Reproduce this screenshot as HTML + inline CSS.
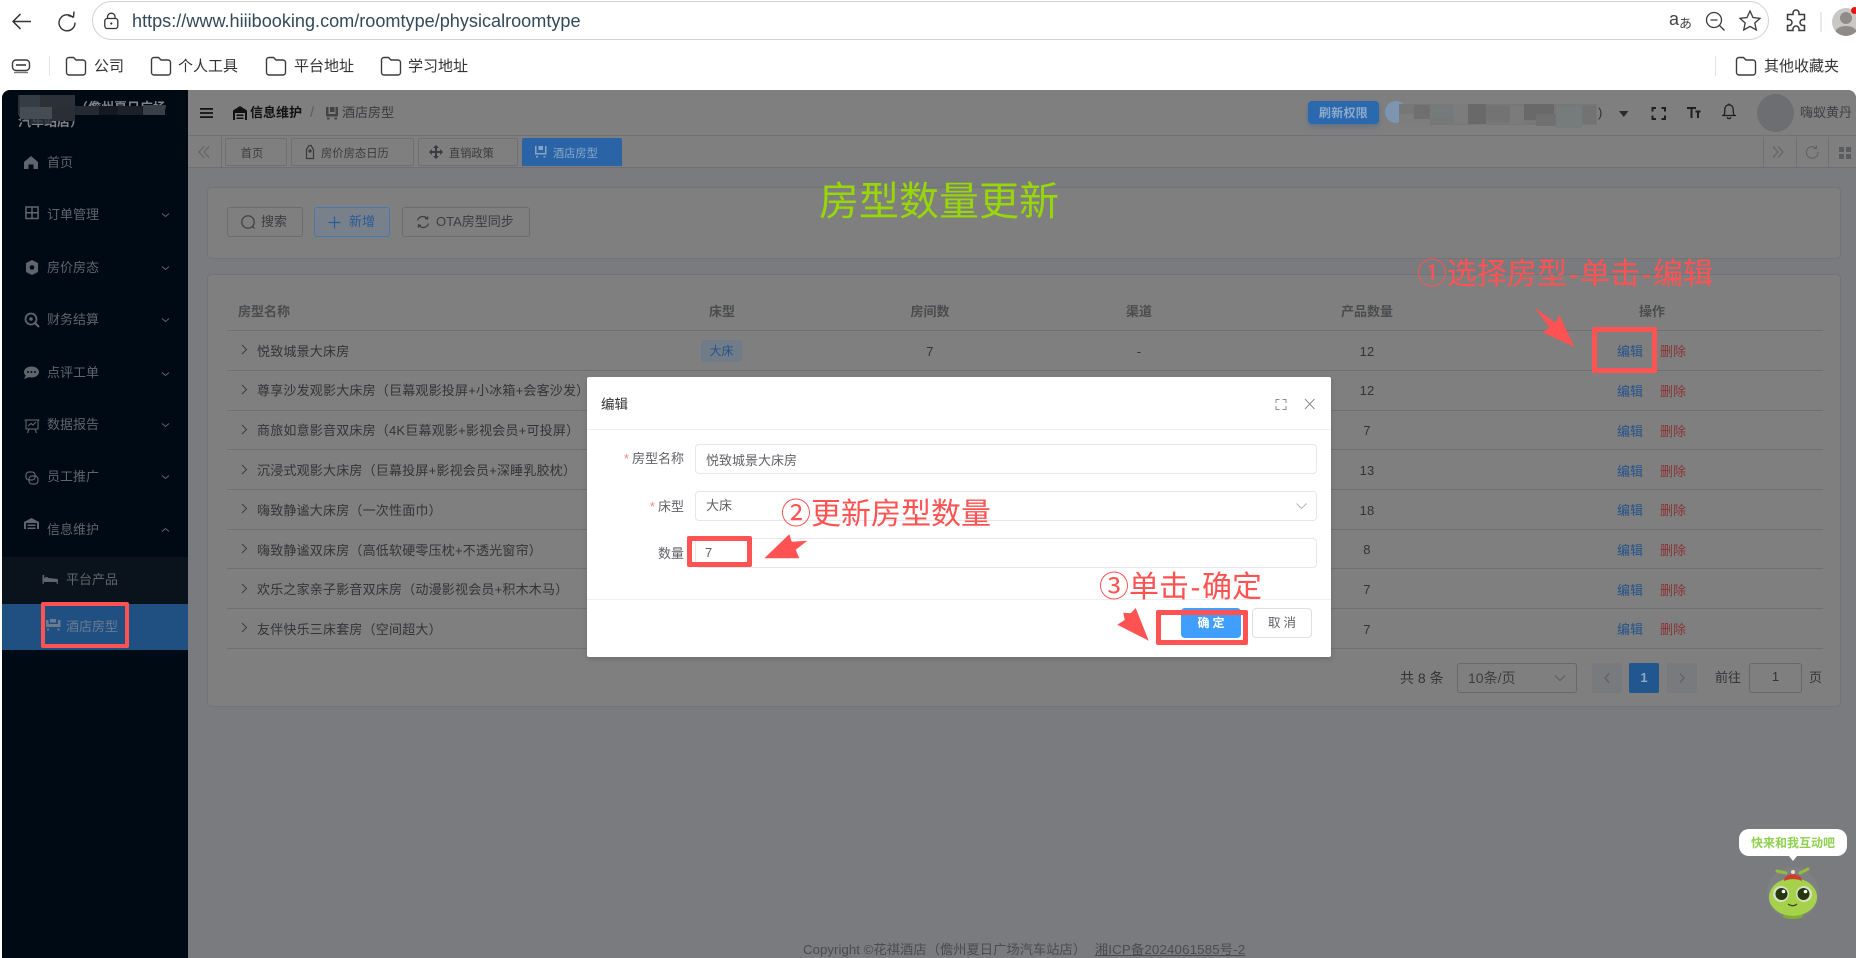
<!DOCTYPE html>
<html><head><meta charset="utf-8"><title>酒店房型</title>
<style>
html,body{margin:0;padding:0;width:1856px;height:958px;overflow:hidden;background:#fff}
body{position:relative;font-family:"Liberation Sans","Noto Sans CJK SC",sans-serif;font-size:13px}
.a{position:absolute;box-sizing:border-box}
.t{position:absolute;white-space:nowrap;line-height:20px;height:20px}
.c{transform:translateX(-50%)}
.r{transform:translateX(-100%)}
svg{position:absolute;overflow:visible}
.bk{font-size:15px;color:#333}
.m{font-size:13px;color:#5e656c}
.n{font-size:13px;color:#333437;letter-spacing:.2px}
.e{color:#24538b}.d{color:#8a3335}
.line{position:absolute;left:227px;width:1596px;height:1px;background:#6f7073}
.an{position:absolute;white-space:nowrap;color:#ff5252;font-size:30px;line-height:40px;height:40px;font-family:"Liberation Sans","Noto Sans CJK SC",sans-serif}
.an i{font-style:normal;margin:0 1.5px}
.box{position:absolute;box-sizing:border-box;border:5px solid #ff5252;border-radius:2px}
.tab{position:absolute;top:138px;height:28px;box-sizing:border-box;border:1px solid #6f7073;background:#7f7f7f;border-radius:2px}
.btn{position:absolute;top:207px;height:30px;box-sizing:border-box;border:1px solid #6b6c6f;border-radius:3px;background:#7f7f7f}
.ipt{position:absolute;left:695px;width:622px;height:30px;box-sizing:border-box;border:1px solid #e4e7ed;border-radius:4px;background:#fff}
.lbl{color:#606266;font-size:13px}
.pg{position:absolute;top:663px;height:30px;box-sizing:border-box;border-radius:2px}
</style></head><body>

<!-- browser chrome -->
<div class="a" style="left:92px;top:1px;width:1677px;height:39px;border:1.5px solid #d2d2d2;border-radius:20px;background:#fff"></div>
<svg style="left:0;top:0" width="130" height="42" fill="none" stroke="#333" stroke-width="1.5">
<path d="M31 21.5H13M20.5 14L13 21.5L20.5 29"/>
<path d="M73 17.5A8 8 0 1 0 75 22.5" stroke-width="1.4"/><path d="M68 15.5l5.5 1.5l.5-5.5" stroke-width="1.4"/>
<rect x="104.8" y="18.5" width="13" height="10" rx="2.5" stroke-width="1.3"/><path d="M107.5 18.5v-1.5a3.8 3.8 0 0 1 7.6 0v1.5" stroke-width="1.3"/><circle cx="111.3" cy="23.5" r="1.1" fill="#333" stroke="none"/>
</svg>
<div class="t" style="left:132px;top:11px;font-size:18.1px;color:#33495a">https://www.hiiibooking.com/roomtype/physicalroomtype</div>
<svg style="left:1660px;top:5px" width="196" height="36" fill="none" stroke="#3a3a3a" stroke-width="1.3">
<circle cx="54" cy="15" r="7.5"/><path d="M50.5 15h7M59.5 20.5l5 5"/>
<path d="M90 6l3 6.5 7 .8-5.2 4.7 1.5 7-6.3-3.6-6.3 3.6 1.5-7L80 13.3l7-.8z"/>
<path d="M133 8a3 3 0 0 1 6 0v1.5h5.5v5h-1.5a3 3 0 0 0 0 6h1.5v5h-5.5v-1.5a3 3 0 0 0-6 0v1.5h-5.5v-5H129a3 3 0 0 0 0-6h-1.5v-5H133z" stroke-width="1.5"/>
<path d="M161 7v20" stroke="#ddd"/>
</svg>
<div class="t" style="left:1669px;top:9px;font-size:18px;color:#444">a</div>
<div class="t" style="left:1679px;top:14px;font-size:13px;color:#444">あ</div>
<div class="a" style="left:1832px;top:8px;width:28px;height:28px;border-radius:50%;background:#c9c8c6;overflow:hidden"><div class="a" style="left:8px;top:4px;width:12px;height:12px;border-radius:50%;background:#8e8b88"></div><div class="a" style="left:3px;top:18px;width:22px;height:14px;border-radius:50%;background:#8e8b88"></div></div>
<div class="a" style="left:1851px;top:7px;width:7px;height:7px;border-radius:50%;background:#e11"></div>

<!-- bookmarks -->
<svg style="left:0;top:50px" width="1856" height="32" fill="none" stroke="#3c3c3c" stroke-width="1.4">
<rect x="12.5" y="10" width="17" height="10.5" rx="3.5"/><path d="M16 15h10" stroke-width="1.6"/><path d="M14 22.5h14" stroke="#777"/>
<path d="M49.5 6v20M1715.5 6v20" stroke="#e4e4e4" stroke-width="1"/>
<path id="f" d="M66.5 10a2.5 2.5 0 0 1 2.5-2.5h4.5l2.5 2.5h7a2.5 2.5 0 0 1 2.5 2.5v10a2.5 2.5 0 0 1-2.5 2.5h-14a2.5 2.5 0 0 1-2.5-2.5z"/>
<use href="#f" x="85"/><use href="#f" x="200"/><use href="#f" x="315"/><use href="#f" x="1670"/>
</svg>
<div class="t bk" style="left:94px;top:57px">公司</div>
<div class="t bk" style="left:178px;top:57px">个人工具</div>
<div class="t bk" style="left:294px;top:57px">平台地址</div>
<div class="t bk" style="left:408px;top:57px">学习地址</div>
<div class="t bk" style="left:1764px;top:57px">其他收藏夹</div>

<!-- app background -->
<div class="a" style="left:2px;top:90px;width:1854px;height:868px;background:#7a7b7e;border-radius:8px 8px 0 0;overflow:hidden">
<div class="a" style="left:186px;top:0;width:1668px;height:46px;background:#7f7f7f;border-bottom:1px solid #717275"></div>
<div class="a" style="left:186px;top:46px;width:1668px;height:32px;background:#7f7f7f;border-bottom:1px solid #6f7073"></div>
<div class="a" style="left:0;top:0;width:186px;height:868px;background:#000a14"></div>
<div class="a" style="left:0;top:466.5px;width:186px;height:47px;background:#0a121b"></div>
<div class="a" style="left:0;top:513.5px;width:186px;height:46.5px;background:#204f82"></div>
</div>

<!-- sidebar header, mosaic -->
<div class="t" style="left:75px;top:98px;font-size:13px;font-weight:bold;color:#7f8488">（儋州夏日广场</div>
<div class="t" style="left:18px;top:112px;font-size:13px;font-weight:bold;color:#7f8488">汽车站店）</div>
<svg style="left:18px;top:95px" width="150" height="36">
<rect x="57" y="11" width="90" height="9" fill="#14191f"/><rect x="57" y="11" width="24" height="9" fill="#242a31"/><rect x="100" y="11" width="24" height="9" fill="#1c2127"/><rect x="125" y="10" width="22" height="10" fill="#3a4047"/>
<rect x="0" y="0" width="57" height="20" fill="#2c3138"/><rect x="2" y="0" width="20" height="12" fill="#363c44"/><rect x="2" y="12" width="32" height="12" fill="#464c54"/><rect x="34" y="12" width="23" height="14" fill="#2a2f36"/><rect x="12" y="24" width="22" height="5" fill="#30353c" opacity=".8"/>
</svg>

<!-- sidebar icons -->
<svg style="left:0;top:130px" width="188" height="520" fill="#5e656c" stroke="none">
<path d="M31 26l7 6v7h-4.5v-4.5h-5V39H24v-7z"/>
<g fill="none" stroke="#5e656c" stroke-width="1.5"><rect x="26" y="77" width="12" height="11.5"/><path d="M26 82.8h12M32 77v11.5"/></g>
<path d="M32 130l6 3v9l-6 3-6-3v-9z"/><circle cx="32" cy="137.5" r="2.3" fill="#000a14"/>
<circle cx="31" cy="189" r="5.5" fill="none" stroke="#5e656c" stroke-width="1.8"/><path d="M35 193l4 4" stroke="#5e656c" stroke-width="2.2"/><circle cx="31" cy="189" r="1.8"/>
<ellipse cx="31.5" cy="242" rx="7.5" ry="5.5"/><path d="M26 245l-2 4 5-2z"/><circle cx="28" cy="242" r="1" fill="#000a14"/><circle cx="31.5" cy="242" r="1" fill="#000a14"/><circle cx="35" cy="242" r="1" fill="#000a14"/>
<g fill="none" stroke="#5e656c" stroke-width="1.1"><rect x="26" y="290" width="12" height="9"/><path d="M24.5 290h15M29 299l-1.5 4M35 299l1.5 4M28 296l3-2.5 2 1.5 3-3"/></g>
<g fill="none" stroke="#5e656c" stroke-width="1.2"><rect x="26" y="342" width="9" height="8" rx="3"/><rect x="29" y="346" width="9" height="8" rx="3"/></g>
<path d="M24 399v-7l7.5-4 7.5 4v7h-2v-6h-11v6z"/><path d="M27.5 394.5h8v1.5h-8zM27.5 397.5h8v1.5h-8z"/>
<g><path d="M42.5 445v9h1.2v-2h13v2h1.2v-5l-9-1h-4.7v-3z"/><rect x="45" y="447" width="3" height="2.5" rx="1"/></g>
<g fill="#6a7b90"><path d="M46 490h2.5v4h9.5v-4H60.5v7H46zM50 489h6v3.5h-6zM47 498.5h2v2h-2zM57.5 498.5h2v2h-2z"/></g>
<g fill="none" stroke="#5e656c" stroke-width="1"><path d="M162 83.5l3.5 3 3.5-3M162 136.5l3.5 3 3.5-3M162 188.5l3.5 3 3.5-3M162 242.5l3.5 3 3.5-3M162 293.5l3.5 3 3.5-3M162 345.5l3.5 3 3.5-3M162 401.5l3.5-3 3.5 3"/></g>
</svg>
<div class="t m" style="left:47px;top:153px">首页</div>
<div class="t m" style="left:47px;top:205px">订单管理</div>
<div class="t m" style="left:47px;top:258px">房价房态</div>
<div class="t m" style="left:47px;top:310px">财务结算</div>
<div class="t m" style="left:47px;top:363px">点评工单</div>
<div class="t m" style="left:47px;top:415px">数据报告</div>
<div class="t m" style="left:47px;top:467px">员工推广</div>
<div class="t m" style="left:47px;top:520px">信息维护</div>
<div class="t m" style="left:66px;top:570px">平台产品</div>
<div class="t m" style="left:66px;top:617px;color:#6a7b90">酒店房型</div>

<!-- header -->
<svg style="left:190px;top:95px" width="220" height="36" fill="#111214">
<path d="M10 13h13v1.8H10zM10 17.1h13v1.8H10zM10 21.2h13v1.8H10z"/>
<path d="M43 25V15.5L50 11l7 4.5V25h-2v-7H45v7z"/><path d="M46.5 19.5h7v1.5h-7zM46.5 22.5h7V24h-7z"/>
<g fill="#424346"><path d="M136 12h2.5v7h7v-7h2.5v9.5h-12zM140 12h4.5v5H140zM137 22.5h2.5v2H137zM144.5 22.500h2.500v2h-2.500z"/></g>
</svg>
<div class="t" style="left:250px;top:103px;font-weight:bold;color:#111214">信息维护</div>
<div class="t" style="left:310px;top:103px;font-size:15px;color:#5c5d60">/</div>
<div class="t" style="left:342px;top:103px;color:#3a3b3e">酒店房型</div>

<div class="a" style="left:1308px;top:101px;width:71px;height:23px;background:#2a69ae;border-radius:4px;box-shadow:0 2px 4px rgba(40,90,150,.4)"></div>
<div class="t c" style="left:1343.5px;top:102.5px;font-size:12px;font-weight:bold;color:#8eaacb;letter-spacing:.3px">刷新权限</div>
<svg style="left:1384px;top:100px" width="225" height="30">
<circle cx="12" cy="12" r="11" fill="#7d95b0"/>
<rect x="15" y="4" width="198" height="21" fill="#777"/><rect x="15" y="14" width="31" height="11" fill="#7d7d7d"/><rect x="30" y="5" width="16" height="14" fill="#6f6f6f"/><rect x="46" y="5" width="24" height="13" fill="#757a7a"/><rect x="70" y="4" width="14" height="20" fill="#7c7c7c"/><rect x="84" y="4" width="18" height="20" fill="#696969"/><rect x="102" y="6" width="24" height="16" fill="#737373"/><rect x="126" y="6" width="14" height="18" fill="#7b7b7b"/><rect x="140" y="4" width="30" height="16" fill="#696969"/><rect x="152" y="14" width="20" height="12" fill="#707070"/><rect x="172" y="6" width="26" height="22" fill="#767b7b"/><rect x="198" y="6" width="14" height="18" fill="#737373"/>
</svg>
<div class="t" style="left:1598px;top:103px;color:#303133">)</div>
<svg style="left:1600px;top:95px" width="160" height="36" fill="none" stroke="#1e1f21" stroke-width="2">
<path d="M19 16h9.5l-4.750 6z" fill="#2a2b2d" stroke="none"/>
<path d="M52.5 16.5v-3.5h3.5M61.5 13h3.5v3.5M65 20.5v3.5h-3.5M56 24h-3.5v-3.5"/>
<path d="M87 13h9M91.5 13v10M95.5 16.5h5M98 16.5v6.5" stroke-width="2"/>
<path d="M122 20.5h14M123.8 20.5c1.2-2 1-4.5 1-6.5a4.2 4.2 0 0 1 8.4 0c0 2-.2 4.5 1 6.5M126.8 22.5q2.2 2.2 4.4 0M129 8.5v1.5" stroke-width="1.3"/>
</svg>
<div class="a" style="left:1757px;top:94px;width:37px;height:38px;border-radius:50%;background:#6d6e72"></div>
<div class="t" style="left:1800px;top:103px;color:#3f4043">嗨蚁黄丹</div>

<!-- tabs -->
<div class="a" style="left:221px;top:137px;width:1px;height:31px;background:#6f7073"></div>
<svg style="left:196px;top:143px" width="20" height="18" fill="none" stroke="#5f6063" stroke-width="1"><path d="M8 3.5L3 9l5 5.5M13 3.5L8 9l5 5.5"/></svg>
<div class="tab" style="left:225px;width:62px"></div>
<div class="t c" style="left:252px;top:144px;font-size:11.2px;color:#3a3b3e">首页</div>
<div class="tab" style="left:291px;width:123px"></div>
<svg style="left:304px;top:144px" width="12" height="16" fill="none" stroke="#3a3b3e" stroke-width="1.2"><path d="M2.5 5.5L5 1.5h2l2.5 4v9h-7z"/><circle cx="6" cy="7" r="1" fill="#3a3b3e"/></svg>
<div class="t" style="left:321px;top:144px;font-size:11.3px;color:#3a3b3e">房价房态日历</div>
<div class="tab" style="left:418px;width:100px"></div>
<svg style="left:429px;top:145px" width="14" height="14" fill="#3a3b3e"><path d="M6 3h2v3h3V4l3 3-3 3V8H8v3h2l-3 3-3-3h2V8H3v2L0 7l3-3v2h3V3h-2l3-3 3 3z"/></svg>
<div class="t" style="left:449px;top:144px;font-size:11.2px;color:#3a3b3e">直销政策</div>
<div class="a" style="left:522px;top:138px;width:100px;height:28px;background:#2a64a6;border-radius:2px 2px 0 0"></div>
<svg style="left:534px;top:145px" width="14" height="14" fill="#86a4c6"><path d="M1 1h1.5v7H11V1h1.5v8.5H1zM4.5 1h4.5v4H4.5zM2 11h2v1.5H2zM9.5 11h2v1.5h-2z"/></svg>
<div class="t" style="left:553px;top:144px;font-size:11.2px;color:#8aa7c8">酒店房型</div>
<div class="a" style="left:1763px;top:137px;width:1px;height:31px;background:#6f7073"></div>
<div class="a" style="left:1796px;top:137px;width:1px;height:31px;background:#6f7073"></div>
<div class="a" style="left:1828px;top:137px;width:1px;height:31px;background:#6f7073"></div>
<svg style="left:1770px;top:143px" width="86" height="18" fill="none" stroke="#5f6063" stroke-width="1">
<path d="M3 3.5L8 9l-5 5.5M8 3.5L13 9l-5 5.5"/>
<path d="M46 5a5.8 5.8 0 1 0 2 3.8M46.5 2.5V5.5h-3"/>
<path d="M69 4h5v5h-5zM76 4h5v5h-5zM69 11h5v5h-5zM76 11h5v5h-5z" fill="#5a5b5e" stroke="none"/>
</svg>

<!-- panels -->
<div class="a" style="left:207px;top:187px;width:1634px;height:72px;background:#7f7f7f;border:1px solid #727376;border-radius:4px"></div>
<div class="a" style="left:207px;top:274px;width:1634px;height:433px;background:#7f7f7f;border:1px solid #727376;border-radius:4px"></div>

<div class="btn" style="left:227px;width:76px"></div>
<svg style="left:240px;top:214px" width="18" height="18" fill="none" stroke="#3c3d40" stroke-width="1.2"><circle cx="8" cy="8" r="6.2"/><path d="M12.5 12.5l2 2"/></svg>
<div class="t" style="left:261px;top:212px;color:#3c3d40">搜索</div>
<div class="btn" style="left:314px;width:76px;border-color:#4a78a8;background:#77808b"></div>
<svg style="left:327px;top:214px" width="18" height="18" fill="none" stroke="#2b5c95" stroke-width="1.2"><path d="M1.5 8.5h12M7.5 2.5v12"/></svg>
<div class="t" style="left:349px;top:212px;color:#2b5c95">新增</div>
<div class="btn" style="left:402px;width:128px"></div>
<svg style="left:415px;top:214px" width="16" height="16" fill="none" stroke="#3c3d40" stroke-width="1.2"><path d="M2.5 6.5A5.5 5.5 0 0 1 12 4.5M13.5 9.5A5.5 5.5 0 0 1 4 11.5M10 4.5l2.5 .5.3-2.5M6 11.5l-2.5-.5-.3 2.5"/></svg>
<div class="t" style="left:436px;top:212px;color:#3c3d40">OTA房型同步</div>

<!-- table -->
<div class="t" style="left:238px;top:302px;font-weight:bold;color:#4b4c4e">房型名称</div>
<div class="t c" style="left:722px;top:302px;font-weight:bold;color:#4b4c4e">床型</div>
<div class="t c" style="left:930px;top:302px;font-weight:bold;color:#4b4c4e">房间数</div>
<div class="t c" style="left:1139px;top:302px;font-weight:bold;color:#4b4c4e">渠道</div>
<div class="t c" style="left:1367px;top:302px;font-weight:bold;color:#4b4c4e">产品数量</div>
<div class="t c" style="left:1652px;top:302px;font-weight:bold;color:#4b4c4e">操作</div>

<div class="line" style="top:330px"></div><div class="line" style="top:370px"></div><div class="line" style="top:410px"></div><div class="line" style="top:449px"></div><div class="line" style="top:489px"></div><div class="line" style="top:529px"></div><div class="line" style="top:568px"></div><div class="line" style="top:608px"></div><div class="line" style="top:648px"></div>

<svg style="left:240px;top:340px" width="10" height="290" fill="none" stroke="#3c3d40" stroke-width="1"><path d="M2 5l4.5 4.5L2 14M2 45l4.5 4.5L2 54M2 85l4.5 4.5L2 94M2 125l4.5 4.5L2 134M2 164l4.5 4.5L2 173M2 204l4.5 4.5L2 213M2 244l4.5 4.5L2 253M2 283l4.5 4.5L2 292"/></svg>

<div class="t n" style="left:257px;top:342px">悦致城景大床房</div>
<div class="t n" style="left:257px;top:381px">尊享沙发观影大床房（巨幕观影投屏+小冰箱+会客沙发）</div>
<div class="t n" style="left:257px;top:421px">商旅如意影音双床房（4K巨幕观影+影视会员+可投屏）</div>
<div class="t n" style="left:257px;top:461px">沉浸式观影大床房（巨幕投屏+影视会员+深睡乳胶枕）</div>
<div class="t n" style="left:257px;top:501px">嗨致静谧大床房（一次性面巾）</div>
<div class="t n" style="left:257px;top:541px">嗨致静谧双床房（高低软硬零压枕+不透光窗帘）</div>
<div class="t n" style="left:257px;top:580px">欢乐之家亲子影音双床房（动漫影视会员+积木木马）</div>
<div class="t n" style="left:257px;top:620px">友伴快乐三床套房（空间超大）</div>

<div class="a" style="left:701px;top:340px;width:41px;height:22px;background:#727c88;border:1px solid #6c7b8d;border-radius:3px"></div>
<div class="t c" style="left:721.5px;top:341px;font-size:12px;color:#24538b">大床</div>
<div class="t c n" style="left:930px;top:342px">7</div>
<div class="t c n" style="left:1139px;top:342px">-</div>

<div class="t c n" style="left:1367px;top:342px">12</div><div class="t c n" style="left:1367px;top:381px">12</div><div class="t c n" style="left:1367px;top:421px">7</div><div class="t c n" style="left:1367px;top:461px">13</div><div class="t c n" style="left:1367px;top:501px">18</div><div class="t c n" style="left:1367px;top:540px">8</div><div class="t c n" style="left:1367px;top:580px">7</div><div class="t c n" style="left:1367px;top:620px">7</div>

<div class="t c e" style="left:1630px;top:342px">编辑</div><div class="t c d" style="left:1673px;top:342px">删除</div>
<div class="t c e" style="left:1630px;top:382px">编辑</div><div class="t c d" style="left:1673px;top:382px">删除</div>
<div class="t c e" style="left:1630px;top:422px">编辑</div><div class="t c d" style="left:1673px;top:422px">删除</div>
<div class="t c e" style="left:1630px;top:462px">编辑</div><div class="t c d" style="left:1673px;top:462px">删除</div>
<div class="t c e" style="left:1630px;top:501px">编辑</div><div class="t c d" style="left:1673px;top:501px">删除</div>
<div class="t c e" style="left:1630px;top:541px">编辑</div><div class="t c d" style="left:1673px;top:541px">删除</div>
<div class="t c e" style="left:1630px;top:581px">编辑</div><div class="t c d" style="left:1673px;top:581px">删除</div>
<div class="t c e" style="left:1630px;top:620px">编辑</div><div class="t c d" style="left:1673px;top:620px">删除</div>

<!-- pagination -->
<div class="t" style="left:1400px;top:668px;color:#333437;font-size:14px">共 8 条</div>
<div class="pg" style="left:1457px;width:120px;border:1px solid #67686b;border-radius:3px"></div>
<div class="t" style="left:1468px;top:668px;font-size:14px;color:#3c3d40">10条/页</div>
<svg style="left:1552px;top:672px" width="140" height="14" fill="none" stroke="#5b5c5f" stroke-width="1"><path d="M3 3.5l5 5 5-5"/></svg>
<div class="pg" style="left:1592px;width:30px;background:#797a7d"></div>
<div class="pg" style="left:1629px;width:30px;background:#22568f"></div>
<div class="pg" style="left:1667px;width:30px;background:#797a7d"></div>
<svg style="left:1592px;top:663px" width="110" height="30" fill="none" stroke="#5b5c5f" stroke-width="1"><path d="M17 10.5l-4 4.5 4 4.5M88 10.5l4 4.5-4 4.5"/></svg>
<div class="t c" style="left:1644px;top:668px;font-weight:bold;color:#8ea7c4">1</div>
<div class="t" style="left:1715px;top:668px;color:#333437">前往</div>
<div class="pg" style="left:1749px;width:53px;border:1px solid #67686b;border-radius:3px"></div>
<div class="t c" style="left:1775.5px;top:667px;color:#333437">1</div>
<div class="t" style="left:1809px;top:668px;color:#333437">页</div>

<div class="t" style="left:803px;top:940px;font-size:13.3px;color:#4b4c4f">Copyright ©花祺酒店（儋州夏日广场汽车站店） <span style="text-decoration:underline;margin-left:5px;letter-spacing:.15px">湘ICP备2024061585号-2</span></div>

<!-- dialog -->
<div class="a" style="left:587px;top:377px;width:744px;height:280px;background:#fff;border-radius:2px;box-shadow:0 2px 6px rgba(0,0,0,.15)"></div>
<div class="t" style="left:601px;top:395px;font-size:13.5px;color:#303133">编辑</div>
<svg style="left:1270px;top:394px" width="50" height="20" fill="none" stroke="#8b8e94" stroke-width="1"><path d="M6 9V5.5h3.500M12.500 5.500H16V9M16 12v3.500h-3.500M9.500 15.500H6V12"/><path d="M35 5l9.500 10M44.500 5L35 15"/></svg>
<div class="a" style="left:587px;top:428.5px;width:744px;height:1.5px;background:#eeeef3"></div>
<div class="a" style="left:587px;top:598.5px;width:744px;height:1.5px;background:#eeeef3"></div>

<div class="t lbl r" style="left:684px;top:449px"><span style="color:#f78989;margin-right:3px">*</span>房型名称</div>
<div class="ipt" style="top:444px"></div>
<div class="t" style="left:706px;top:451px;font-size:13px;color:#606266">悦致城景大床房</div>
<div class="t lbl r" style="left:684px;top:497px"><span style="color:#f78989;margin-right:3px">*</span>床型</div>
<div class="ipt" style="top:491px"></div>
<div class="t" style="left:706px;top:496px;font-size:13px;color:#606266">大床</div>
<svg style="left:1294px;top:500px" width="14" height="12" fill="none" stroke="#b4b6bb" stroke-width="1"><path d="M2.5 3.5l5 5 5-5"/></svg>
<div class="t lbl r" style="left:684px;top:544px">数量</div>
<div class="ipt" style="top:538px"></div>
<div class="t" style="left:705px;top:543px;font-size:13px;color:#606266">7</div>

<div class="a" style="left:1181px;top:608px;width:60px;height:30px;background:#409eff;border-radius:4px"></div>
<div class="t c" style="left:1211px;top:613px;font-size:12px;font-weight:bold;color:#fff;letter-spacing:3px;padding-left:3px">确定</div>
<div class="a" style="left:1252px;top:608px;width:60px;height:30px;border:1px solid #dcdfe6;border-radius:4px;background:#fff"></div>
<div class="t c" style="left:1282px;top:613px;font-size:12.5px;color:#606266;letter-spacing:3px;padding-left:3px">取消</div>

<!-- annotations -->
<div class="t c" style="left:939px;top:182px;height:40px;line-height:40px;font-size:40px;color:#97d706">房型数量更新</div>
<div class="an" style="left:1417px;top:255px">①选择房型<i>-</i>单击<i>-</i>编辑</div>
<div class="an" style="left:781px;top:495px">②更新房型数量</div>
<div class="an" style="left:1099px;top:568px">③单击<i>-</i>确定</div>
<div class="box" style="left:1592px;top:327px;width:65px;height:46px"></div>
<div class="box" style="left:687px;top:536px;width:65px;height:31px"></div>
<div class="box" style="left:1156px;top:610px;width:92px;height:35px"></div>
<div class="box" style="left:41px;top:602px;width:88px;height:46px;border-width:4px"></div>
<svg style="left:0;top:0" width="1856" height="958" fill="#ff5252">
<polygon points="1534.3,307.3 1555.7,322.7 1559.3,314.7 1574.3,346.7 1542.3,332.3 1549.5,327.5"/>
<polygon points="764.3,558.3 789.3,534.3 791.7,541.7 807.3,540.7 795.7,549.7 799.3,558.3"/>
<polygon points="1148.7,640.7 1135.7,608 1130.7,613.3 1123.3,612.7 1124.7,620 1117.3,624.7"/>
</svg>

<!-- mascot -->
<div class="a" style="left:1739px;top:829px;width:108px;height:27px;background:#fff;border-radius:10px"></div>
<div class="t c" style="left:1793px;top:832.5px;font-size:12px;font-weight:bold;color:#8fd14f">快来和我互动吧</div>
<svg style="left:1760px;top:855px" width="70" height="70">
<path d="M29 1h8l-4 5z" fill="#fff"/>
<circle cx="33" cy="38" r="26" fill="#7f8084"/>
<path d="M26 18l-9-2M40 18l8-4" stroke="#93bc3c" stroke-width="3" stroke-linecap="round"/>
<ellipse cx="33" cy="61" rx="10" ry="3" fill="#7fae30"/>
<ellipse cx="33" cy="42" rx="24" ry="19" fill="#a5d24a"/>
<path d="M24 26c0-9 18-9 18 0c-5-2.500-13-2.500-18 0z" fill="#c9402a"/><circle cx="33" cy="17" r="2" fill="#eadfc8"/>
<circle cx="21" cy="39" r="8" fill="#d6e0c4"/><circle cx="44" cy="39" r="8" fill="#d6e0c4"/>
<circle cx="21.500" cy="39" r="6" fill="#26360f"/><circle cx="43.500" cy="39" r="6" fill="#26360f"/>
<circle cx="23.500" cy="36.500" r="1.800" fill="#fff"/><circle cx="45.500" cy="36.500" r="1.800" fill="#fff"/>
<path d="M28 49q5 3.500 9 0" stroke="#3d4a1a" stroke-width="1.200" fill="none"/>
</svg>
</body></html>
